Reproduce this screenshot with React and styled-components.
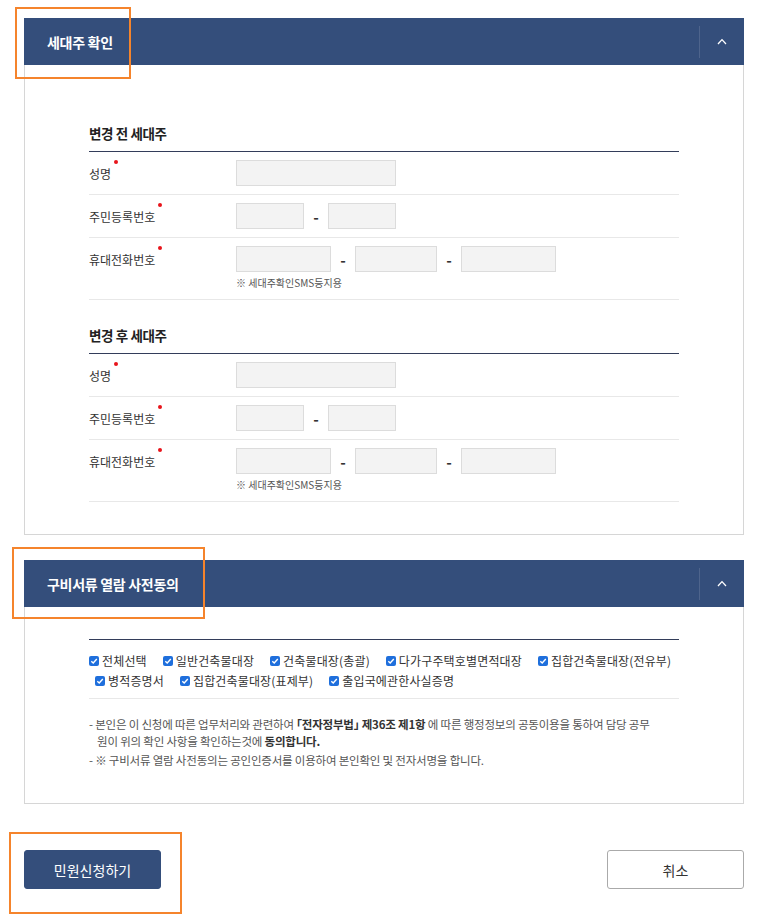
import React from 'react';
import styled, { createGlobalStyle } from 'styled-components';

const Global = createGlobalStyle`
  html, body { margin: 0; padding: 0; background: #fff; }
  body { font-family: "Noto Sans CJK KR", "Noto Sans", sans-serif; color: #333; }
  * { box-sizing: border-box; }
`;

const Page = styled.div`
  position: relative;
  width: 776px;
  padding: 18px 32px 32px 24px;
`;

const Panel = styled.section`
  & + & { margin-top: 25px; }
`;

const PanelHeader = styled.div`
  height: 47px;
  background: #344e7b;
  display: flex;
  align-items: center;
  justify-content: space-between;
  padding-left: 23px;
`;

const PanelTitle = styled.h2`
  margin: 0;
  font-size: 14px;
  line-height: 20px;
  font-weight: 700;
  color: #fff;
  letter-spacing: -0.3px;
`;

const Toggle = styled.button`
  width: 45px;
  height: 32px;
  border: 0;
  border-left: 1px solid rgba(255, 255, 255, 0.13);
  background: transparent;
  display: flex;
  align-items: center;
  justify-content: center;
  padding: 0;
  cursor: pointer;
`;

const PanelBody = styled.div`
  border: 1px solid #d6d6d6;
  border-top: none;
  padding: ${(p) => p.$pad};
`;

const SectionTitle = styled.h3`
  margin: ${(p) => (p.$first ? '0' : '25px 0 0')};
  padding-bottom: 8px;
  border-bottom: 1px solid #333d5a;
  font-size: 13.5px;
  line-height: 20px;
  font-weight: 700;
  color: #222;
  letter-spacing: -0.4px;
`;

const Row = styled.div`
  display: flex;
  align-items: flex-start;
  padding: 8px 0 ${(p) => (p.$note ? '10px' : '8px')};
  border-bottom: 1px solid #e8e8e8;
`;

const Label = styled.div`
  width: 147px;
  flex: none;
  height: 26px;
  display: flex;
  align-items: center;
  font-size: 12px;
  letter-spacing: 0;
  color: #333;
`;

const Req = styled.span`
  position: relative;
  &::after {
    content: '';
    position: absolute;
    right: -7px;
    top: -5px;
    width: 4px;
    height: 4px;
    border-radius: 50%;
    background: #e8141b;
  }
`;

const Field = styled.div`
  display: flex;
  flex-direction: column;
`;

const Inputs = styled.div`
  display: flex;
  align-items: center;
`;

const Input = styled.input`
  width: ${(p) => p.$w}px;
  height: 26px;
  border: 1px solid #dcdcdc;
  background: #f3f3f3;
  padding: 0 6px;
  font: inherit;
  font-size: 12px;
  outline: none;
`;

const Dash = styled.span`
  width: 24px;
  text-align: center;
  font-size: 15px;
  font-weight: 700;
  color: #333;
`;

const Note = styled.p`
  margin: 5px 0 0;
  font-size: 10px;
  line-height: 12px;
  letter-spacing: 0;
  color: #555;
`;

const CheckBlock = styled.div`
  border-top: 1px solid #333d5a;
  border-bottom: 1px solid #e8e8e8;
  padding: 11px 0 7px;
`;

const CheckRow = styled.div`
  display: flex;
  gap: 16px;
  padding-left: ${(p) => p.$indent || 0}px;
`;

const CheckItem = styled.label`
  display: flex;
  align-items: center;
  gap: 3px;
  font-size: 12px;
  line-height: 20px;
  letter-spacing: 0.15px;
  color: #333;
  white-space: nowrap;
`;

const Box = styled.span`
  width: 10px;
  height: 10px;
  border-radius: 2px;
  background: #1f6fdc;
  display: flex;
  align-items: center;
  justify-content: center;
  flex: none;
`;

const Notes = styled.div`
  margin-top: 17px;
`;

const NoteLine = styled.p`
  margin: 0;
  & + & { margin-top: 2px; }
  padding-left: 8px;
  text-indent: -8px;
  font-size: 11.5px;
  line-height: 17px;
  letter-spacing: -0.2px;
  color: #555;
  white-space: nowrap;
  b { color: #333; font-weight: 700; font-feature-settings: "halt"; }
`;

const Actions = styled.div`
  margin-top: 46px;
  display: flex;
  justify-content: space-between;
`;

const Button = styled.button`
  width: 137px;
  height: 39px;
  border-radius: 3px;
  font: inherit;
  font-size: 14px;
  cursor: pointer;
  border: 1px solid ${(p) => (p.$primary ? '#344e7b' : '#aaa')};
  background: ${(p) => (p.$primary ? '#344e7b' : '#fff')};
  color: ${(p) => (p.$primary ? '#fff' : '#333')};
`;

const Highlight = styled.div`
  position: absolute;
  left: ${(p) => p.$x}px;
  top: ${(p) => p.$y}px;
  width: ${(p) => p.$w}px;
  height: ${(p) => p.$h}px;
  border: 2px solid #f5842c;
  pointer-events: none;
`;

const Chevron = () => (
  <svg width="10" height="7" viewBox="0 0 10 7" fill="none">
    <path d="M1 6 L5 1.6 L9 6" stroke="#fff" strokeWidth="1.3" />
  </svg>
);

const Check = () => (
  <svg width="8" height="8" viewBox="0 0 8 8" fill="none">
    <path d="M1.3 4.2 L3.2 6 L6.8 2" stroke="#fff" strokeWidth="1.4" />
  </svg>
);

const Owner = ({ title, first }) => (
  <>
    <SectionTitle $first={first}>{title}</SectionTitle>
    <Row>
      <Label><Req>성명</Req></Label>
      <Inputs><Input $w={160} /></Inputs>
    </Row>
    <Row>
      <Label><Req>주민등록번호</Req></Label>
      <Inputs>
        <Input $w={68} />
        <Dash>-</Dash>
        <Input $w={68} />
      </Inputs>
    </Row>
    <Row $note>
      <Label><Req>휴대전화번호</Req></Label>
      <Field>
        <Inputs>
          <Input $w={95} />
          <Dash>-</Dash>
          <Input $w={82} />
          <Dash>-</Dash>
          <Input $w={95} />
        </Inputs>
        <Note>※ 세대주확인SMS등지용</Note>
      </Field>
    </Row>
  </>
);

const checkRows = [
  { indent: 0, items: ['전체선택', '일반건축물대장', '건축물대장(총괄)', '다가구주택호별면적대장', '집합건축물대장(전유부)'] },
  { indent: 6, items: ['병적증명서', '집합건축물대장(표제부)', '출입국에관한사실증명'] },
];

export default function App() {
  return (
    <Page>
      <Global />
      <Panel>
        <PanelHeader>
          <PanelTitle>세대주 확인</PanelTitle>
          <Toggle aria-label="접기"><Chevron /></Toggle>
        </PanelHeader>
        <PanelBody $pad="58px 64px 32px">
          <Owner title="변경 전 세대주" first />
          <Owner title="변경 후 세대주" />
        </PanelBody>
      </Panel>
      <Panel>
        <PanelHeader>
          <PanelTitle>구비서류 열람 사전동의</PanelTitle>
          <Toggle aria-label="접기"><Chevron /></Toggle>
        </PanelHeader>
        <PanelBody $pad="32px 64px 34px">
          <CheckBlock>
            {checkRows.map((r, i) => (
              <CheckRow key={i} $indent={r.indent}>
                {r.items.map((t) => (
                  <CheckItem key={t}><Box><Check /></Box>{t}</CheckItem>
                ))}
              </CheckRow>
            ))}
          </CheckBlock>
          <Notes>
            <NoteLine>
              - 본인은 이 신청에 따른 업무처리와 관련하여 <b>「전자정부법」 제36조 제1항</b> 에 따른 행정정보의 공동이용을 통하여 담당 공무<br />
              원이 위의 확인 사항을 확인하는것에 <b>동의합니다.</b>
            </NoteLine>
            <NoteLine>- ※ 구비서류 열람 사전동의는 공인인증서를 이용하여 본인확인 및 전자서명을 합니다.</NoteLine>
          </Notes>
        </PanelBody>
      </Panel>
      <Actions>
        <Button $primary>민원신청하기</Button>
        <Button>취소</Button>
      </Actions>
      <Highlight $x={15} $y={7} $w={116} $h={72} />
      <Highlight $x={12} $y={547} $w={193} $h={72} />
      <Highlight $x={9} $y={832} $w={173} $h={82} />
    </Page>
  );
}
